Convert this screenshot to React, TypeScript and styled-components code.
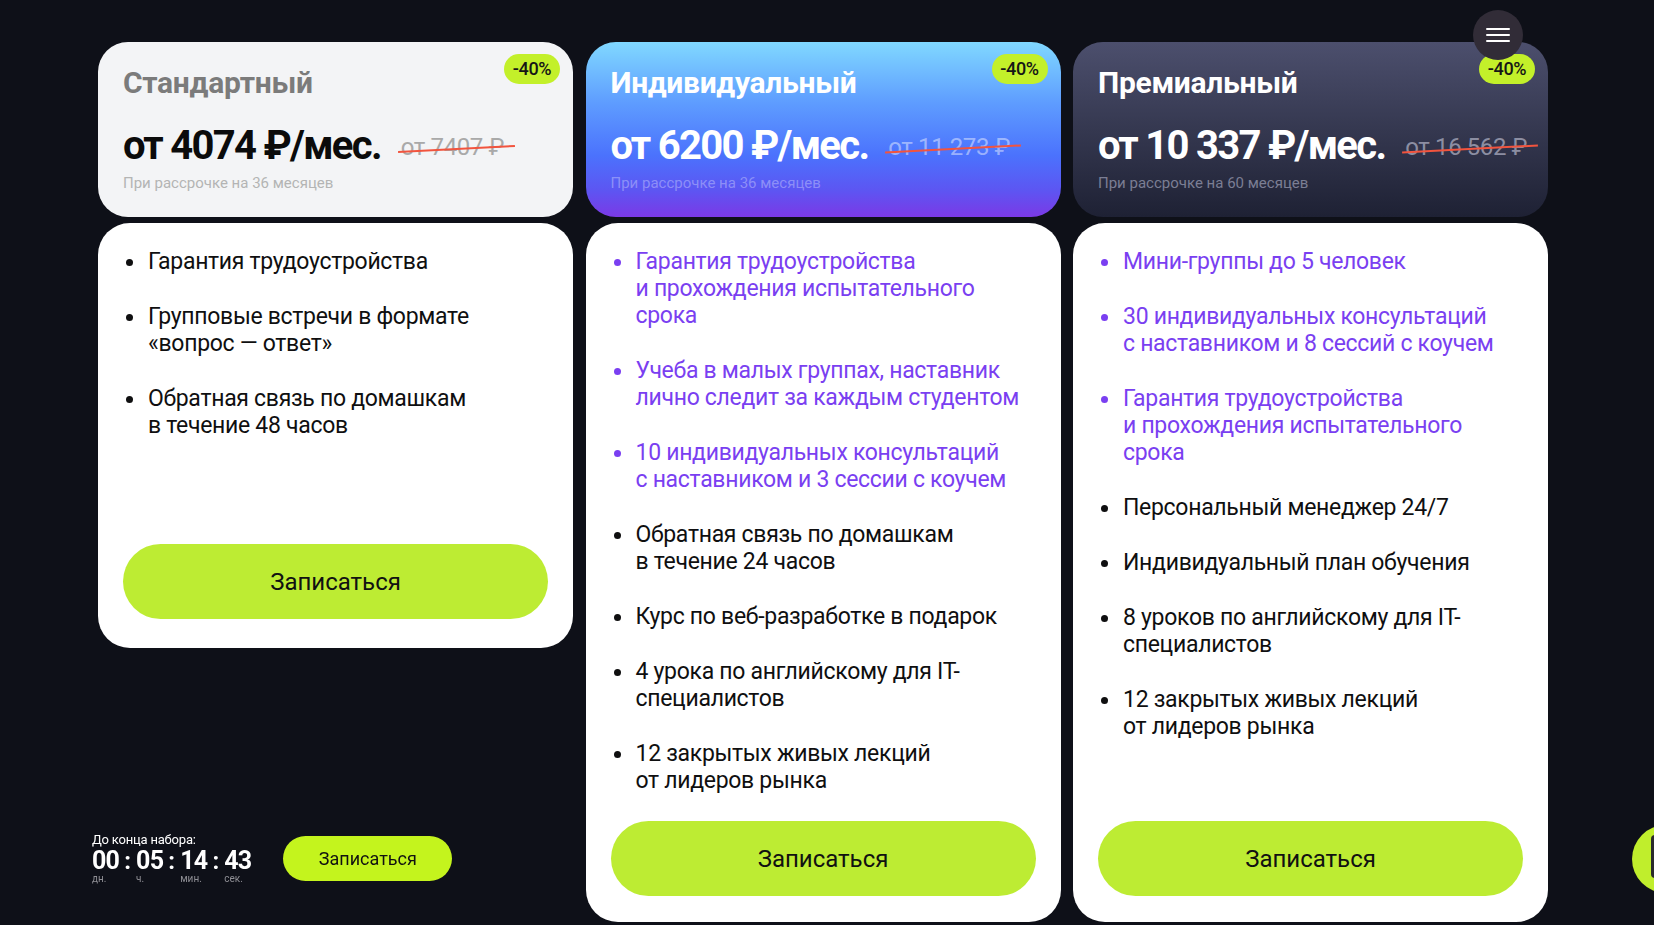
import React from "react";
import styled, { createGlobalStyle, css } from "styled-components";

const GlobalStyle = createGlobalStyle`
  html, body {
    margin: 0;
    padding: 0;
    background: #0e1018;
    overflow: hidden;
  }
  body {
    font-family: Roboto, "Noto Sans", "Liberation Sans", sans-serif;
    -webkit-font-smoothing: antialiased;
  }
  * { box-sizing: border-box; }
`;

type Variant = "standard" | "individual" | "premium";

const palette: Record<
  Variant,
  { bg: string; title: string; price: string; old: string; sub: string }
> = {
  standard: {
    bg: "#f3f4f6",
    title: "#7b7b7b",
    price: "#0b0b0b",
    old: "#a9a9a9",
    sub: "#b4b4b4",
  },
  individual: {
    bg: "linear-gradient(180deg, #80d8ff 0%, #5e9cff 35%, #4b72fd 65%, #5d55f2 85%, #7b39e6 100%)",
    title: "#ffffff",
    price: "#ffffff",
    old: "rgba(255,255,255,0.45)",
    sub: "rgba(255,255,255,0.32)",
  },
  premium: {
    bg: "linear-gradient(180deg, #4c4f6d 0%, #353850 50%, #1e2134 100%)",
    title: "#ffffff",
    price: "#ffffff",
    old: "#8c8ea2",
    sub: "#7b7e94",
  },
};

const Page = styled.main`
  padding: 42px 0 0 98px;
`;

const Plans = styled.div`
  display: flex;
  align-items: stretch;
  gap: 12.5px;
  width: 1450px;
`;

const Column = styled.section<{ $compact?: boolean }>`
  width: 475px;
  display: flex;
  flex-direction: column;
  gap: 6px;
  align-self: ${(p) => (p.$compact ? "flex-start" : "stretch")};
`;

const Header = styled.header<{ $variant: Variant }>`
  position: relative;
  height: 175px;
  border-radius: 30px;
  padding: 23px 25px 25px;
  background: ${(p) => palette[p.$variant].bg};
  display: flex;
  flex-direction: column;
`;

const Title = styled.h2<{ $variant: Variant }>`
  margin: 0;
  font-size: 30px;
  line-height: 36px;
  font-weight: 700;
  letter-spacing: -0.3px;
  color: ${(p) => palette[p.$variant].title};
`;

const PriceRow = styled.div`
  margin-top: 23px;
  display: flex;
  align-items: center;
  height: 44px;
`;

const Price = styled.div<{ $variant: Variant }>`
  font-size: 40px;
  line-height: 44px;
  font-weight: 700;
  letter-spacing: -1.7px;
  color: ${(p) => palette[p.$variant].price};
  white-space: nowrap;
`;

const OldPrice = styled.div<{ $variant: Variant }>`
  position: relative;
  margin-left: 20px;
  margin-top: 2px;
  font-size: 24px;
  line-height: 28px;
  font-weight: 400;
  letter-spacing: -0.4px;
  color: ${(p) => palette[p.$variant].old};
  white-space: nowrap;

  &::after {
    content: "";
    position: absolute;
    left: -3px;
    right: -11px;
    top: 52%;
    height: 1.5px;
    background: #f2543e;
    transform: rotate(-3deg);
  }
`;

const Installment = styled.div<{ $variant: Variant }>`
  margin-top: 6px;
  font-size: 15px;
  line-height: 18px;
  color: ${(p) => palette[p.$variant].sub};
`;

const Discount = styled.span`
  position: absolute;
  top: 12px;
  right: 13px;
  height: 30px;
  padding: 0 7px;
  min-width: 56px;
  border-radius: 15px;
  background: #c3f02a;
  color: #161616;
  font-size: 18px;
  font-weight: 500;
  line-height: 30px;
  text-align: center;
  letter-spacing: -0.3px;
`;

const Body = styled.div<{ $compact?: boolean }>`
  flex: 1;
  min-height: 425px;
  background: #ffffff;
  border-radius: 32px;
  padding: 25px 25px ${(p) => (p.$compact ? "29px" : "26px")};
  display: flex;
  flex-direction: column;
`;

const Features = styled.ul`
  list-style: none;
  margin: 0 0 27px;
  padding: 0;
  display: flex;
  flex-direction: column;
  gap: 28px;
`;

const Feature = styled.li<{ $accent?: boolean }>`
  display: flex;
  align-items: flex-start;
  gap: 15px;
  padding-left: 3px;
  font-size: 23px;
  line-height: 27px;
  letter-spacing: -0.3px;
  white-space: pre-line;
  color: ${(p) => (p.$accent ? "#7a3ff1" : "#0f0f10")};
`;

const Dot = styled.span`
  flex-shrink: 0;
  width: 7px;
  height: 7px;
  margin-top: 11px;
  border-radius: 50%;
  background: currentColor;
`;

const ctaBase = css`
  border: none;
  cursor: pointer;
  font-family: inherit;
  color: #111111;
  font-weight: 400;
`;

const SignUp = styled.button`
  ${ctaBase};
  margin-top: auto;
  width: 100%;
  height: 75px;
  border-radius: 38px;
  background: #bdec33;
  font-size: 24px;
`;

/* floating widgets */
const MenuButton = styled.button`
  position: fixed;
  top: 10px;
  right: 131px;
  width: 50px;
  height: 50px;
  border-radius: 50%;
  border: none;
  background: #312c37;
  display: flex;
  flex-direction: column;
  align-items: center;
  justify-content: center;
  gap: 4.5px;
  padding: 0;
  z-index: 5;
`;

const MenuLine = styled.span`
  width: 24px;
  height: 1.6px;
  background: #ffffff;
  border-radius: 1px;
`;

const Countdown = styled.div`
  position: fixed;
  left: 92px;
  bottom: 41px;
  display: flex;
  align-items: center;
  gap: 32px;
  z-index: 5;
`;

const CountdownInfo = styled.div`
  display: flex;
  flex-direction: column;
`;

const CountdownCaption = styled.div`
  font-size: 13px;
  line-height: 14px;
  color: #ffffff;
  letter-spacing: -0.2px;
`;

const Units = styled.div`
  display: flex;
  align-items: flex-start;
  margin-top: 2px;
`;

const Unit = styled.div`
  display: flex;
  flex-direction: column;
`;

const UnitValue = styled.span`
  font-size: 25px;
  line-height: 24px;
  font-weight: 700;
  color: #ffffff;
  letter-spacing: -0.8px;
`;

const UnitLabel = styled.span`
  font-size: 10px;
  line-height: 11px;
  color: #8e8e94;
`;

const Colon = styled.span`
  font-size: 24px;
  line-height: 24px;
  font-weight: 700;
  color: #ffffff;
  width: 17px;
  text-align: center;
`;

const SmallSignUp = styled.button`
  ${ctaBase};
  width: 169px;
  height: 45px;
  border-radius: 23px;
  background: #c4f41d;
  font-size: 18px;
`;

const Chat = styled.div`
  position: fixed;
  right: -46px;
  bottom: 32px;
  width: 68px;
  height: 68px;
  border-radius: 50%;
  background: #c0ee2c;
  z-index: 5;
`;

const ChatGlyph = styled.span`
  display: block;
  margin: 10px 0 0 19px;
  width: 30px;
  height: 43px;
  border-radius: 4px;
  background: #2b2b2b;
`;

type Item = { text: string; accent?: boolean };

type Plan = {
  variant: Variant;
  title: string;
  price: string;
  old: string;
  months: number;
  items: Item[];
};

const plans: Plan[] = [
  {
    variant: "standard",
    title: "Стандартный",
    price: "от 4074 ₽/мес.",
    old: "от 7407 ₽",
    months: 36,
    items: [
      { text: "Гарантия трудоустройства" },
      { text: "Групповые встречи в формате\n«вопрос — ответ»" },
      { text: "Обратная связь по домашкам\nв течение 48 часов" },
    ],
  },
  {
    variant: "individual",
    title: "Индивидуальный",
    price: "от 6200 ₽/мес.",
    old: "от 11 273 ₽",
    months: 36,
    items: [
      { text: "Гарантия трудоустройства\nи прохождения испытательного\nсрока", accent: true },
      { text: "Учеба в малых группах, наставник\nлично следит за каждым студентом", accent: true },
      { text: "10 индивидуальных консультаций\nс наставником и 3 сессии с коучем", accent: true },
      { text: "Обратная связь по домашкам\nв течение 24 часов" },
      { text: "Курс по веб-разработке в подарок" },
      { text: "4 урока по английскому для IT-\nспециалистов" },
      { text: "12 закрытых живых лекций\nот лидеров рынка" },
    ],
  },
  {
    variant: "premium",
    title: "Премиальный",
    price: "от 10 337 ₽/мес.",
    old: "от 16 562 ₽",
    months: 60,
    items: [
      { text: "Мини-группы до 5 человек", accent: true },
      { text: "30 индивидуальных консультаций\nс наставником и 8 сессий с коучем", accent: true },
      { text: "Гарантия трудоустройства\nи прохождения испытательного\nсрока", accent: true },
      { text: "Персональный менеджер 24/7" },
      { text: "Индивидуальный план обучения" },
      { text: "8 уроков по английскому для IT-\nспециалистов" },
      { text: "12 закрытых живых лекций\nот лидеров рынка" },
    ],
  },
];

const timer = [
  { value: "00", label: "дн." },
  { value: "05", label: "ч." },
  { value: "14", label: "мин." },
  { value: "43", label: "сек." },
];

export default function App() {
  return (
    <>
      <GlobalStyle />
      <Page>
        <Plans>
          {plans.map((plan) => {
            const compact = plan.variant === "standard";
            return (
              <Column key={plan.variant} $compact={compact}>
                <Header $variant={plan.variant}>
                  <Title $variant={plan.variant}>{plan.title}</Title>
                  <PriceRow>
                    <Price $variant={plan.variant}>{plan.price}</Price>
                    <OldPrice $variant={plan.variant}>{plan.old}</OldPrice>
                  </PriceRow>
                  <Installment $variant={plan.variant}>
                    При рассрочке на {plan.months} месяцев
                  </Installment>
                  <Discount>-40%</Discount>
                </Header>
                <Body $compact={compact}>
                  <Features>
                    {plan.items.map((item, i) => (
                      <Feature key={i} $accent={item.accent}>
                        <Dot />
                        <span>{item.text}</span>
                      </Feature>
                    ))}
                  </Features>
                  <SignUp>Записаться</SignUp>
                </Body>
              </Column>
            );
          })}
        </Plans>
      </Page>

      <MenuButton aria-label="Меню">
        <MenuLine />
        <MenuLine />
        <MenuLine />
      </MenuButton>

      <Countdown>
        <CountdownInfo>
          <CountdownCaption>До конца набора:</CountdownCaption>
          <Units>
            {timer.map((t, i) => (
              <React.Fragment key={t.label}>
                {i > 0 && <Colon>:</Colon>}
                <Unit>
                  <UnitValue>{t.value}</UnitValue>
                  <UnitLabel>{t.label}</UnitLabel>
                </Unit>
              </React.Fragment>
            ))}
          </Units>
        </CountdownInfo>
        <SmallSignUp>Записаться</SmallSignUp>
      </Countdown>

      <Chat>
        <ChatGlyph />
      </Chat>
    </>
  );
}
